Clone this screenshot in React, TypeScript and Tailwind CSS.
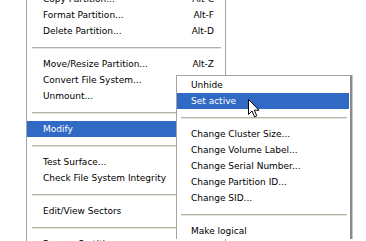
import React from "react";

type Entry = { label?: string; shortcut?: string; sep?: boolean; active?: boolean };

const mainItems: Entry[] = [
  { label: "Copy Partition...", shortcut: "Alt-C" },
  { label: "Format Partition...", shortcut: "Alt-F" },
  { label: "Delete Partition...", shortcut: "Alt-D" },
  { sep: true },
  { label: "Move/Resize Partition...", shortcut: "Alt-Z" },
  { label: "Convert File System..." },
  { label: "Unmount..." },
  { sep: true },
  { label: "Modify", active: true },
  { sep: true },
  { label: "Test Surface..." },
  { label: "Check File System Integrity" },
  { sep: true },
  { label: "Edit/View Sectors" },
  { sep: true },
  { label: "Browse Partition..." },
];

const subItems: Entry[] = [
  { label: "Unhide" },
  { label: "Set active", active: true },
  { sep: true },
  { label: "Change Cluster Size..." },
  { label: "Change Volume Label..." },
  { label: "Change Serial Number..." },
  { label: "Change Partition ID..." },
  { label: "Change SID..." },
  { sep: true },
  { label: "Make logical" },
];

function Separator({ inset }: { inset: string }) {
  return (
    <div className={`h-[17px] flex items-center ${inset}`}>
      <div className="w-full h-[2px] border-t border-[#b4b1a6] bg-[#e6e4dc]" />
    </div>
  );
}

function Cursor() {
  return (
    <svg
      className="absolute left-[248px] top-[99px]"
      width="12"
      height="19"
      viewBox="0 0 12 19"
    >
      <path
        d="M0.5 0.5 L0.5 15.5 L4 12 L6.5 17.8 L8.8 16.8 L6.3 11.2 L11 11.2 Z"
        fill="#ffffff"
        stroke="#000000"
        strokeWidth="1"
        strokeLinejoin="miter"
      />
    </svg>
  );
}

export default function App() {
  return (
    <div
      className="relative w-[366px] h-[241px] overflow-hidden bg-white text-black"
      style={{ fontFamily: '"DejaVu Sans", Verdana, sans-serif' }}
    >
      <div className="ml-[26px] mt-[-9px] w-[200px] border-l border-r border-[#a3a3a3] bg-white">
        {mainItems.map((it, i) =>
          it.sep ? (
            <Separator key={i} inset="pl-[5px] pr-[4px]" />
          ) : (
            <div
              key={i}
              className={`h-[16px] flex items-center justify-between pl-[16px] pr-[11px] text-[9px] leading-none whitespace-nowrap ${
                it.active ? "bg-[#316ac5] text-white" : ""
              }`}
            >
              <span>{it.label}</span>
              {it.shortcut && <span>{it.shortcut}</span>}
            </div>
          )
        )}
      </div>

      <div className="absolute left-[176px] top-[75px] w-[176px] border-t border-l border-[#a3a3a3] border-r-2 border-r-[#8a8a8a] bg-white pt-px pr-px shadow-[1px_0_0_#c8c8c8]">
        {subItems.map((it, i) =>
          it.sep ? (
            <Separator key={i} inset="pl-[4px] pr-[2px]" />
          ) : (
            <div
              key={i}
              className={`h-[16px] flex items-center pl-[14px] text-[9px] leading-none whitespace-nowrap ${
                it.active ? "bg-[#316ac5] text-white" : ""
              }`}
            >
              <span>{it.label}</span>
            </div>
          )
        )}
      </div>

      <Cursor />
    </div>
  );
}
